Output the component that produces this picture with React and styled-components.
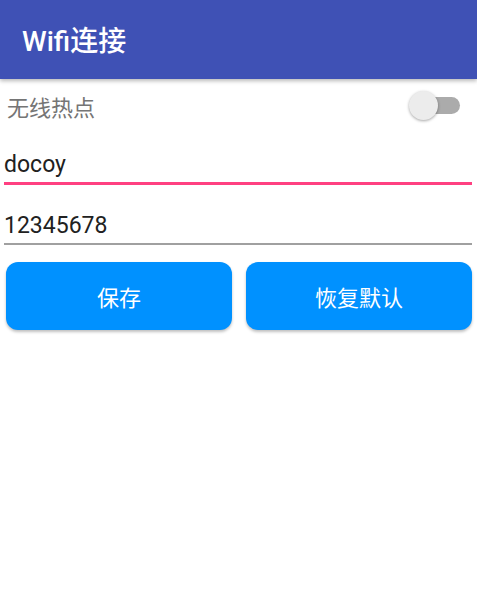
import React, { useState } from "react";
import styled, { createGlobalStyle } from "styled-components";

const GlobalStyle = createGlobalStyle`
  body {
    margin: 0;
    background: #ffffff;
    font-family: Roboto, "Noto Sans CJK SC", sans-serif;
  }
`;

const Page = styled.div`
  width: 477px;
  min-height: 598px;
  background: #fff;
`;

const AppBar = styled.header`
  height: 79px;
  background: #3f51b5;
  display: flex;
  align-items: center;
  padding-left: 22px;
  box-shadow: 0 2px 4px rgba(0, 0, 0, 0.28);
  position: relative;
  z-index: 1;
`;

const Title = styled.h1`
  margin: 0;
  color: #fff;
  font-size: 28px;
  font-weight: 500;
  font-family: Roboto, "Noto Sans CJK SC", sans-serif;
  padding-bottom: 1px;
`;

const Content = styled.main`
  padding: 0 4px;
`;

const SwitchRow = styled.div`
  display: flex;
  align-items: center;
  justify-content: space-between;
  height: 53px;
  padding: 0 13px 0 3px;
`;

const Label = styled.span`
  font-size: 22px;
  color: #757575;
`;

const Track = styled.div`
  position: relative;
  width: 42px;
  height: 17px;
  border-radius: 9px;
  background: ${(p) => (p.on ? "#f8a0bd" : "#ababab")};
  cursor: pointer;
`;

const Thumb = styled.div`
  position: absolute;
  top: -6px;
  left: ${(p) => (p.on ? "23px" : "-9px")};
  width: 29px;
  height: 29px;
  border-radius: 50%;
  background: ${(p) => (p.on ? "#ff4081" : "#ececec")};
  box-shadow: 0 1px 3px rgba(0, 0, 0, 0.35);
`;

const Field = styled.input`
  display: block;
  width: 100%;
  box-sizing: content-box;
  border: none;
  outline: none;
  background: transparent;
  font-family: Roboto, "Noto Sans CJK SC", sans-serif;
  font-size: 23px;
  line-height: 27px;
  height: 27px;
  color: #212121;
  padding: ${(p) => p.top}px 0 4px 0;
  border-bottom: ${(p) => (p.focused ? "3px solid #ff4081" : "2px solid #a0a0a0")};
`;

const FieldWrap = styled.div`
  padding-right: 1px;
`;

const ButtonRow = styled.div`
  display: grid;
  grid-template-columns: 1fr 1fr;
  gap: 14px;
  padding: 17px 1px 0 2px;
`;

const Button = styled.button`
  height: 68px;
  border: none;
  border-radius: 12px;
  background: #0091ff;
  color: #fff;
  font-size: 22px;
  font-family: Roboto, "Noto Sans CJK SC", sans-serif;
  box-shadow: 0 2px 3px rgba(0, 0, 0, 0.25);
  cursor: pointer;
`;

export default function App() {
  const [on, setOn] = useState(false);
  return (
    <Page>
      <GlobalStyle />
      <AppBar>
        <Title>Wifi连接</Title>
      </AppBar>
      <Content>
        <SwitchRow>
          <Label>无线热点</Label>
          <Track on={on ? 1 : 0} onClick={() => setOn(!on)}>
            <Thumb on={on ? 1 : 0} />
          </Track>
        </SwitchRow>
        <FieldWrap>
          <Field top={19} focused defaultValue="docoy" />
        </FieldWrap>
        <FieldWrap>
          <Field top={27} defaultValue="12345678" />
        </FieldWrap>
        <ButtonRow>
          <Button>保存</Button>
          <Button>恢复默认</Button>
        </ButtonRow>
      </Content>
    </Page>
  );
}
